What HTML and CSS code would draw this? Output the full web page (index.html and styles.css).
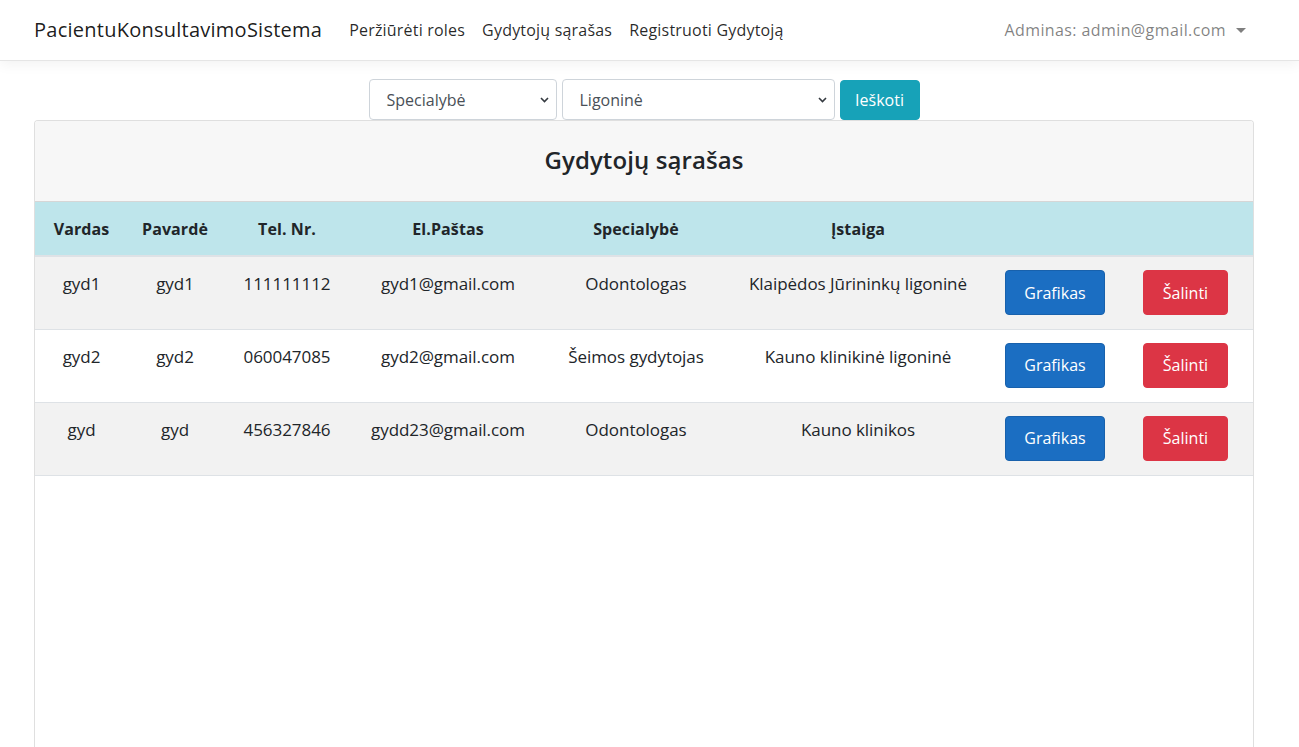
FILE: index.html
```html
<!DOCTYPE html>
<html lang="lt">
<head>
<meta charset="utf-8">
<title>Gydytojų sąrašas</title>
<link rel="stylesheet" href="styles.css">
</head>
<body>
<header class="navbar">
  <div class="nav-inner">
    <a class="brand" href="#">PacientuKonsultavimoSistema</a>
    <nav class="nav-links">
      <a href="#">Peržiūrėti roles</a>
      <a href="#">Gydytojų sąrašas</a>
      <a href="#">Registruoti Gydytoją</a>
    </nav>
    <div class="user-menu">
      <span>Adminas: admin@gmail.com</span>
      <span class="caret"></span>
    </div>
  </div>
</header>
<main class="container">
  <div class="search-row">
    <div class="select select-spec">
      <span>Specialybė</span>
      <svg width="9" height="6" viewBox="0 0 9 6"><path d="M1 1l3.5 3.5L8 1" fill="none" stroke="#343a40" stroke-width="1.6"/></svg>
    </div>
    <div class="select select-hosp">
      <span>Ligoninė</span>
      <svg width="9" height="6" viewBox="0 0 9 6"><path d="M1 1l3.5 3.5L8 1" fill="none" stroke="#343a40" stroke-width="1.6"/></svg>
    </div>
    <button class="btn btn-info">Ieškoti</button>
  </div>
  <section class="card">
    <div class="card-header">
      <h4>Gydytojų sąrašas</h4>
    </div>
    <table class="table">
      <colgroup>
        <col class="c1"><col class="c2"><col class="c3"><col class="c4"><col class="c5"><col class="c6"><col class="c7"><col class="c8">
      </colgroup>
      <thead>
        <tr>
          <th>Vardas</th><th>Pavardė</th><th>Tel. Nr.</th><th>El.Paštas</th><th>Specialybė</th><th>Įstaiga</th><th></th><th></th>
        </tr>
      </thead>
      <tbody>
        <tr>
          <td>gyd1</td><td>gyd1</td><td>111111112</td><td>gyd1@gmail.com</td><td>Odontologas</td><td>Klaipėdos Jūrininkų ligoninė</td>
          <td class="act"><button class="btn btn-primary">Grafikas</button></td>
          <td class="act"><button class="btn btn-danger">Šalinti</button></td>
        </tr>
        <tr>
          <td>gyd2</td><td>gyd2</td><td>060047085</td><td>gyd2@gmail.com</td><td>Šeimos gydytojas</td><td>Kauno klinikinė ligoninė</td>
          <td class="act"><button class="btn btn-primary">Grafikas</button></td>
          <td class="act"><button class="btn btn-danger">Šalinti</button></td>
        </tr>
        <tr>
          <td>gyd</td><td>gyd</td><td>456327846</td><td>gydd23@gmail.com</td><td>Odontologas</td><td>Kauno klinikos</td>
          <td class="act"><button class="btn btn-primary">Grafikas</button></td>
          <td class="act"><button class="btn btn-danger">Šalinti</button></td>
        </tr>
      </tbody>
    </table>
  </section>
</main>
</body>
</html>
```
FILE: styles.css
```css
* { box-sizing: border-box; }
html, body { margin: 0; padding: 0; }
body {
  font-family: "Open Sans", "Noto Sans", "Liberation Sans", sans-serif;
  font-size: 16px;
  line-height: 24px;
  color: #212529;
  background: #fff;
  overflow: hidden;
}
a { text-decoration: none; }

.navbar {
  height: 61px;
  background: #fff;
  border-bottom: 1px solid #e5e5e5;
  box-shadow: 0 4px 12px rgba(0,0,0,.05);
}
.nav-inner {
  display: flex;
  align-items: center;
  height: 60px;
  padding: 0 45px 0 34px;
}
.brand {
  font-size: 20px;
  color: rgba(0,0,0,.9);
  margin-right: 27px;
  letter-spacing: 0.25px;
}
.nav-links { display: flex; gap: 17px; }
.nav-links a {
  color: rgba(0,0,0,.85);
  font-size: 16px;
  letter-spacing: 0.2px;
}
.user-menu {
  margin-left: auto;
  display: flex;
  align-items: center;
  color: rgba(0,0,0,.5);
  font-size: 16px;
  padding-right: 8px;
  letter-spacing: 0.4px;
}
.caret {
  width: 0; height: 0;
  margin-left: 10px;
  border-top: 5px solid rgba(0,0,0,.5);
  border-left: 5px solid transparent;
  border-right: 5px solid transparent;
}

.container {
  width: 1220px;
  margin-left: 34px;
}
.search-row {
  display: flex;
  justify-content: center;
  gap: 5px;
  margin-top: 18px;
  height: 41px;
  align-items: flex-start;
}
.select {
  height: 41px;
  border: 1px solid #ced4da;
  border-radius: 4px;
  display: flex;
  align-items: center;
  justify-content: space-between;
  padding: 0 7px 0 17px;
  color: #495057;
  font-size: 16px;
  background: #fff;
}
.select-spec { width: 188px; }
.select-hosp { width: 273px; }
.btn {
  font-family: inherit;
  font-size: 16px;
  line-height: 24px;
  color: #fff;
  border-radius: 4px;
  border: 1px solid transparent;
  cursor: pointer;
}
.btn-info {
  width: 80px;
  height: 40px;
  margin-top: 1px;
  background: #17a2b8;
  border-color: #17a2b8;
  padding: 0;
}
.btn-primary {
  width: 100px;
  height: 45px;
  background: #1b6ec2;
  border-color: #1861ac;
  padding: 0;
}
.btn-danger {
  width: 85px;
  height: 45px;
  margin-right: 4px;
  background: #dc3545;
  border-color: #dc3545;
  padding: 0;
}

.card {
  border: 1px solid #dfdfdf;
  border-bottom: 0;
  border-radius: 4px 4px 0 0;
  height: 627px;
  overflow: hidden;
}
.card-header {
  background: #f7f7f7;
  border-bottom: 1px solid #d6d6d6;
  height: 81px;
  display: flex;
  align-items: center;
  justify-content: center;
  padding-bottom: 3px;
}
.card-header h4 {
  margin: 0;
  font-size: 24px;
  font-weight: 600;
  color: #212529;
  letter-spacing: 0.1px;
}

.table {
  width: 1218px;
  border-collapse: collapse;
  table-layout: fixed;
}
.c1 { width: 93px; } .c2 { width: 94px; } .c3 { width: 130px; } .c4 { width: 192px; }
.c5 { width: 184px; } .c6 { width: 260px; } .c7 { width: 134px; } .c8 { width: 131px; }
.table th {
  background: #bee5eb;
  font-weight: 700;
  font-size: 16px;
  text-align: center;
  padding: 14px 4px 13px;
  height: 54px;
  border-bottom: 2px solid #dee2e6;
  letter-spacing: 0.1px;
}
.table td {
  text-align: center;
  vertical-align: top;
  padding: 15px 4px 0;
  height: 73px;
  border-top: 1px solid #dee2e6;
  font-size: 17px;
  letter-spacing: -0.05px;
  white-space: nowrap;
}
.table td.act { padding-top: 13px; }
.table tbody tr:nth-child(odd) { background: #f2f2f2; }
.table tbody tr:last-child td { border-bottom: 1px solid #dee2e6; }
```
